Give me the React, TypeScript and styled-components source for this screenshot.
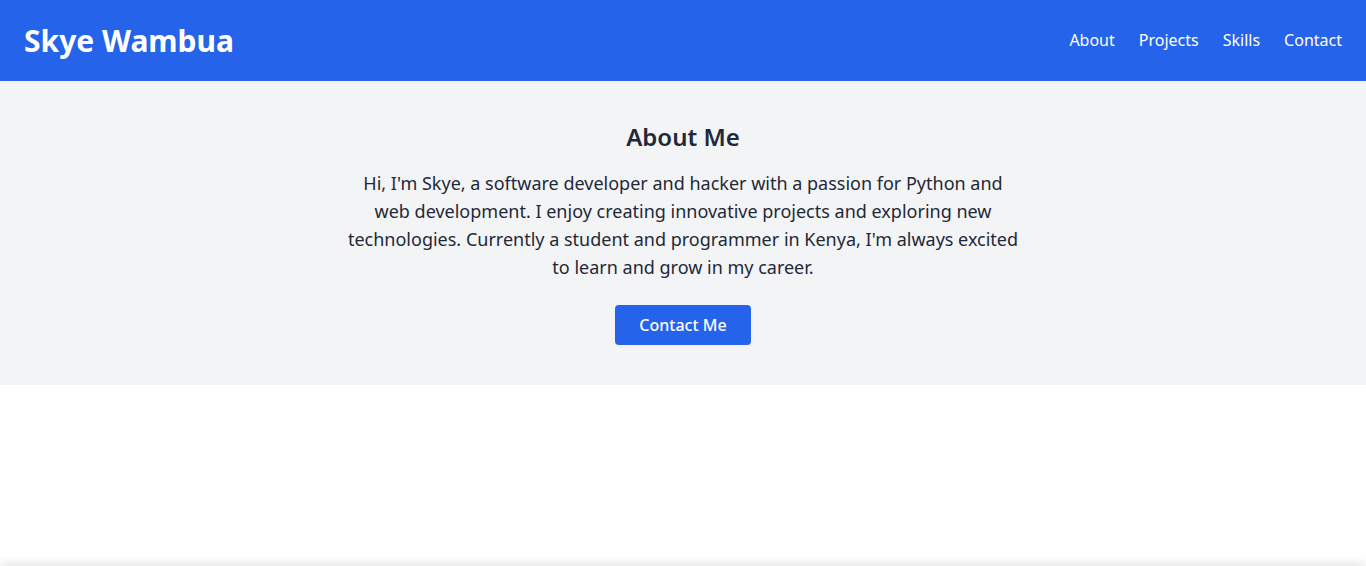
import React from "react";
import styled, { createGlobalStyle } from "styled-components";

const Global = createGlobalStyle`
  html, body { margin: 0; padding: 0; background: #ffffff; }
  body { font-family: "Noto Sans", "Open Sans", sans-serif; color: #1f2937; overflow: hidden; }
  * { box-sizing: border-box; }
`;

const Header = styled.header`
  background: #2563eb;
  color: #ffffff;
  display: flex;
  align-items: center;
  justify-content: space-between;
  padding: 20px 24px;
  height: 81px;
`;

const Logo = styled.h1`
  margin: 0;
  font-size: 30px;
  font-weight: 700;
  line-height: 41px;
`;

const Nav = styled.nav`
  display: flex;
  gap: 24px;
  padding-bottom: 2px;
`;

const NavLink = styled.a`
  color: #ffffff;
  text-decoration: none;
  font-size: 16px;
  line-height: 24px;
`;

const About = styled.section`
  background: #f3f4f6;
  padding: 40px 0;
  display: flex;
  flex-direction: column;
  align-items: center;
  text-align: center;
`;

const Title = styled.h2`
  margin: 0 0 16px;
  font-size: 24px;
  line-height: 32px;
  font-weight: 600;
  color: #1f2937;
`;

const Text = styled.p`
  margin: 0;
  max-width: 672px;
  font-size: 18px;
  line-height: 28px;
  color: #1f2937;
`;

const Button = styled.a`
  margin-top: 24px;
  display: inline-block;
  background: #2563eb;
  color: #ffffff;
  text-decoration: none;
  padding: 8px 24px;
  font-size: 16px;
  font-weight: 500;
  line-height: 24px;
  border-radius: 4px;
`;

const Spacer = styled.div`
  height: 181px;
  background: #ffffff;
`;

const NextSection = styled.section`
  height: 200px;
  background: #ffffff;
  box-shadow: 0 -3px 10px rgba(0, 0, 0, 0.1);
`;

export default function App() {
  return (
    <>
      <Global />
      <Header>
        <Logo>Skye Wambua</Logo>
        <Nav>
          <NavLink href="#about">About</NavLink>
          <NavLink href="#projects">Projects</NavLink>
          <NavLink href="#skills">Skills</NavLink>
          <NavLink href="#contact">Contact</NavLink>
        </Nav>
      </Header>
      <About id="about">
        <Title>About Me</Title>
        <Text>
          Hi, I'm Skye, a software developer and hacker with a passion for Python and web
          development. I enjoy creating innovative projects and exploring new technologies.
          Currently a student and programmer in Kenya, I'm always excited to learn and grow in
          my career.
        </Text>
        <Button href="#contact">Contact Me</Button>
      </About>
      <Spacer />
      <NextSection id="projects" />
    </>
  );
}
